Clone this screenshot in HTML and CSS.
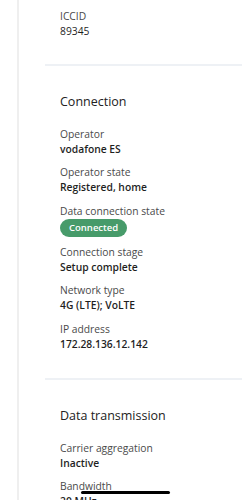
FILE: index.html
```html
<!DOCTYPE html>
<html lang="en">
<head>
    <meta charset="UTF-8">
    <meta name="viewport" content="width=device-width, initial-scale=1.0">
    <title>Mobile network status</title>
    <link rel="stylesheet" href="styles.css">
</head>
<body>
    <div class="page">
        <section class="card first">
            <div class="field">
                <div class="label">ICCID</div>
                <div class="value plain">89345</div>
            </div>
        </section>

        <hr class="divider">

        <section class="card">
            <h2>Connection</h2>
            <div class="field">
                <div class="label">Operator</div>
                <div class="value">vodafone ES</div>
            </div>
            <div class="field">
                <div class="label">Operator state</div>
                <div class="value">Registered, home</div>
            </div>
            <div class="field">
                <div class="label">Data connection state</div>
                <div class="pill">Connected</div>
            </div>
            <div class="field">
                <div class="label">Connection stage</div>
                <div class="value">Setup complete</div>
            </div>
            <div class="field">
                <div class="label">Network type</div>
                <div class="value">4G (LTE); VoLTE</div>
            </div>
            <div class="field">
                <div class="label">IP address</div>
                <div class="value">172.28.136.12.142</div>
            </div>
        </section>

        <hr class="divider">

        <section class="card">
            <h2>Data transmission</h2>
            <div class="field">
                <div class="label">Carrier aggregation</div>
                <div class="value">Inactive</div>
            </div>
            <div class="field">
                <div class="label">Bandwidth</div>
                <div class="value">20 MHz</div>
            </div>
        </section>
    </div>
    <div class="home-indicator"></div>
</body>
</html>
```

FILE: styles.css
```css
html, body {
    margin: 0;
    padding: 0;
    height: 500px;
    overflow: hidden;
    background: #ffffff;
}
body {
    font-family: "Open Sans", Arial, sans-serif;
    color: #222222;
}
.page {
    margin-left: 17px;
    border-left: 2px solid #efefef;
    min-height: 500px;
}
.card {
    padding: 0 0 17px 41px;
}
.card.first {
    padding-top: 9px;
    padding-bottom: 16px;
}
h2 {
    margin: 0;
    padding: 27px 0 17px;
    font-size: 12.5px;
    font-weight: 500;
    line-height: 17px;
    color: #222222;
}
.field {
    margin-bottom: 8px;
}
.label {
    font-size: 10.3px;
    line-height: 15px;
    color: #4a4a4a;
}
.value {
    font-size: 10.3px;
    font-weight: 600;
    line-height: 15.6px;
    color: #1f1f1f;
}
.value.plain {
    font-weight: 400;
}
.pill {
    width: fit-content;
    padding: 0 9px;
    height: 18px;
    line-height: 18px;
    border-radius: 9px;
    background: #479b6a;
    color: #ffffff;
    font-size: 9.5px;
    font-weight: 600;
}
.divider {
    margin: 0 9px 0 26px;
    border: none;
    border-top: 2px solid #eef1f5;
}
.home-indicator {
    position: absolute;
    left: 81px;
    top: 491px;
    width: 89px;
    height: 3px;
    border-radius: 2px;
    background: #000000;
}
```
